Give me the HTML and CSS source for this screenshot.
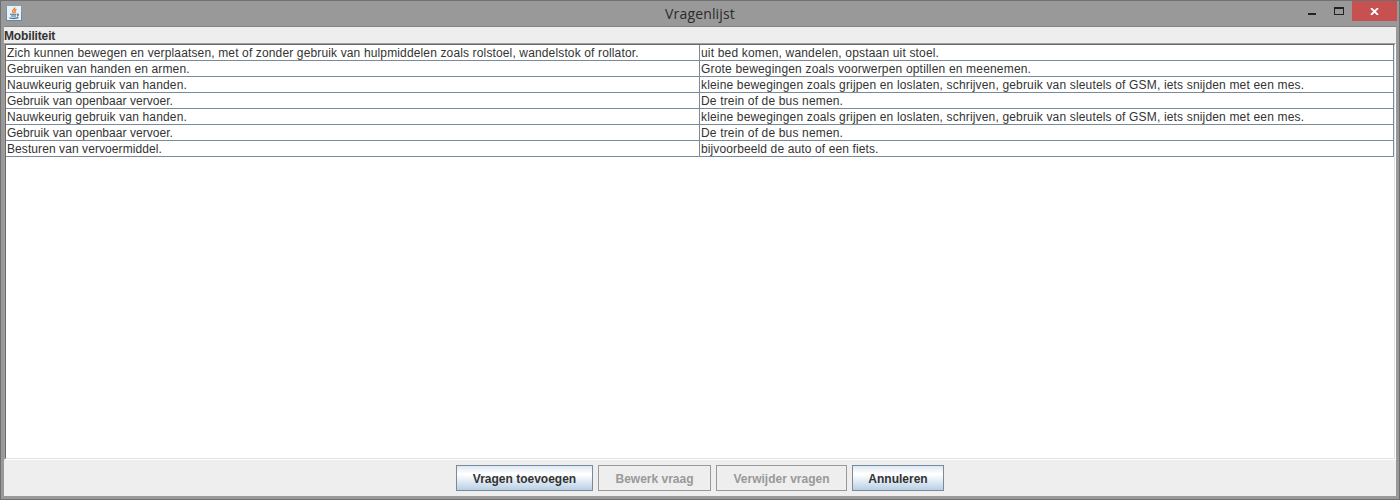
FILE: index.html
```html
<!DOCTYPE html>
<html lang="nl">
<head>
<meta charset="utf-8">
<title>Vragenlijst</title>
<link rel="stylesheet" href="styles.css">
</head>
<body>
<div class="window">
  <header class="titlebar">
    <svg class="app-icon" width="16" height="16" viewBox="0 0 16 16">
      <defs><linearGradient id="tile" x1="0" y1="0" x2="0" y2="1"><stop offset="0" stop-color="#7ba2bd"/><stop offset="1" stop-color="#5b87a8"/></linearGradient></defs>
      <rect width="16" height="16" rx="1" fill="url(#tile)"/>
      <rect x="1" y="1" width="14" height="14" fill="#eef1f4"/>
      <path d="M8.600 2.500C9.500 4.300 5.800 4.800 6.700 6.600L7.700 8M10.500 4.300C8.500 5 8.200 5.700 9.200 6.600L8.700 8" fill="none" stroke="#ea7a24" stroke-width="1.300"/>
      <path d="M4 9.300H10.500M5 11H10M11 9C13 8.700 12.800 10.600 10.900 11.100M3.300 12.800C5 13.600 10.500 13.600 12.500 12.500" fill="none" stroke="#416e91" stroke-width="1.100"/>
    </svg>
    <h1 class="title">Vragenlijst</h1>
    <div class="controls">
      <span class="control minimize"><i class="bar"></i></span>
      <span class="control maximize"><i class="box"></i></span>
      <span class="control close">
        <svg width="9" height="7" viewBox="0 0 9 7"><path d="M1 0L8 7M8 0L1 7" stroke="#fff" stroke-width="1.800"/></svg>
      </span>
    </div>
  </header>
  <main class="client">
    <h2 class="group">Mobiliteit</h2>
    <div class="scroll">
      <div class="table">
        <div class="cell t1">Zich kunnen bewegen en verplaatsen, met of zonder gebruik van hulpmiddelen zoals rolstoel, wandelstok of rollator.</div>
        <div class="cell t2">uit bed komen, wandelen, opstaan uit stoel.</div>
        <div class="cell t3">Gebruiken van handen en armen.</div>
        <div class="cell t4">Grote bewegingen zoals voorwerpen optillen en meenemen.</div>
        <div class="cell t5">Nauwkeurig gebruik van handen.</div>
        <div class="cell t6">kleine bewegingen zoals grijpen en loslaten, schrijven, gebruik van sleutels of GSM, iets snijden met een mes.</div>
        <div class="cell t7">Gebruik van openbaar vervoer.</div>
        <div class="cell t8">De trein of de bus nemen.</div>
        <div class="cell t5">Nauwkeurig gebruik van handen.</div>
        <div class="cell t6">kleine bewegingen zoals grijpen en loslaten, schrijven, gebruik van sleutels of GSM, iets snijden met een mes.</div>
        <div class="cell t7">Gebruik van openbaar vervoer.</div>
        <div class="cell t8">De trein of de bus nemen.</div>
        <div class="cell t9">Besturen van vervoermiddel.</div>
        <div class="cell t10">bijvoorbeeld de auto of een fiets.</div>
      </div>
    </div>
    <footer class="actions">
      <button class="button add">Vragen toevoegen</button>
      <button class="button edit" disabled>Bewerk vraag</button>
      <button class="button remove" disabled>Verwijder vragen</button>
      <button class="button cancel">Annuleren</button>
    </footer>
  </main>
</div>
</body>
</html>
```
FILE: styles.css
```css
* { box-sizing: border-box; }
body { margin: 0; overflow: hidden; }
.window {
  width: 1400px; height: 500px;
  display: flex; flex-direction: column;
  border: 1px solid #707070;
  padding: 0 3px 3px;
  background: #999;
  font: 12px/15px "Liberation Sans", Arial, sans-serif;
  color: #333;
}
.titlebar {
  height: 26px; flex: none;
  display: grid; grid-template-columns: 1fr auto 1fr;
  align-items: start;
  border-bottom: 1px solid #858585;
}
.app-icon { margin: 4px 0 0 2px; }
.title {
  margin: 3px 0 0;
  font: 400 14px/20px "Open Sans", "Noto Sans", sans-serif;
  letter-spacing: .15px;
  color: #2b2b2b;
}
.controls { display: flex; justify-content: flex-end; height: 20px; margin-right: -1px; }
.control { width: 27px; height: 20px; display: flex; justify-content: center; }
.bar { width: 8px; height: 2px; margin-top: 12px; background: #222; }
.box { width: 10px; height: 8px; margin-top: 6px; border: 1px solid #222; border-top-width: 2px; }
.close { width: 45px; background: #c75050; }
.close svg { margin-top: 7px; }
.client { flex: 1; display: flex; flex-direction: column; background: #eee; }
.group { margin: 0; height: 16px; flex: none; font-size: 12px; line-height: 18px; font-weight: 700; letter-spacing: -.15px; }
.scroll {
  flex: 1;
  border: 1px solid #a0a0a0;
  border-right-color: #fff;
  border-bottom-color: #fff;
}
.table {
  height: 100%;
  display: grid; grid-template-columns: 694px 694px; grid-auto-rows: 16px; align-content: start;
  border: 1px solid #696969;
  border-right-color: #e3e3e3;
  border-bottom-color: #e3e3e3;
  background: #fff;
}
.cell {
  border-right: 1px solid #7a8a99;
  border-bottom: 1px solid #7a8a99;
  padding-left: 1px;
  line-height: 16px;
  white-space: nowrap;
}
.t1 { letter-spacing: .14px; }
.t2 { letter-spacing: .17px; }
.t3 { letter-spacing: .13px; }
.t4 { letter-spacing: .18px; }
.t5 { letter-spacing: .15px; }
.t6 { letter-spacing: .165px; }
.t7 { letter-spacing: .04px; }
.t8 { letter-spacing: .16px; }
.t9 { letter-spacing: .08px; }
.t10 { letter-spacing: .12px; }
.actions { height: 36px; flex: none; display: flex; justify-content: center; gap: 5px; padding-top: 5px; }
.button {
  height: 26px; padding: 2px 0 0;
  border: 1px solid #7a8a99;
  background: linear-gradient(#dde8f3 0, #fff 32%, #fff 36%, #b8cfe5 100%);
  font: 700 12px/22px "Liberation Sans", Arial, sans-serif;
  color: #333;
}
.button:disabled { border-color: #999; background: #eee; color: #999; }
.add { width: 137px; }
.edit { width: 113px; }
.remove { width: 131px; }
.cancel { width: 92px; }
```
